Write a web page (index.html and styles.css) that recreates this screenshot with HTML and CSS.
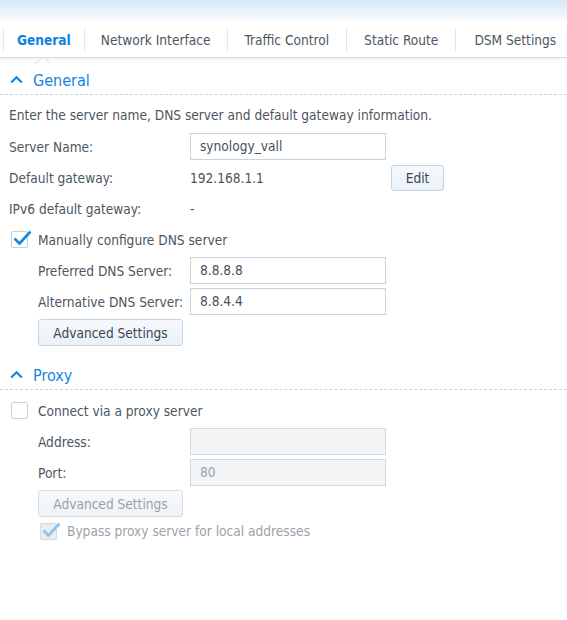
FILE: index.html
```html
<!DOCTYPE html>
<html>
<head>
<meta charset="utf-8">
<link rel="stylesheet" href="styles.css">
</head>
<body>
<div class="topband"></div>
<div class="tabs">
  <div class="tab active">General
    <svg class="notch" width="16" height="7" viewBox="0 0 16 7"><path d="M0 6.5 L8 0.5 L16 6.5" fill="#fff" stroke="#d3d9df" stroke-width="1"/></svg>
  </div>
  <div class="tab net">Network Interface</div>
  <div class="tab">Traffic Control</div>
  <div class="tab">Static Route</div>
  <div class="tab last">DSM Settings</div>
</div>

<div class="section-head first">
  <svg class="chev" width="13" height="9" viewBox="0 0 13 9"><path d="M1.2 7.5 L6.5 2.2 L11.8 7.5" fill="none" stroke="#1585de" stroke-width="2.2"/></svg>
  <span>General</span>
</div>
<div class="section-body general">
  <div class="desc">Enter the server name, DNS server and default gateway information.</div>
  <div class="rows">
    <div class="row"><span class="label">Server Name:</span><div class="input">synology_vall</div></div>
    <div class="row"><span class="label">Default gateway:</span><span class="value">192.168.1.1</span><button class="btn edit">Edit</button></div>
    <div class="row"><span class="label">IPv6 default gateway:</span><span class="value">-</span></div>
    <div class="row"><span class="cb checked"><svg class="tick" width="20" height="18" viewBox="0 0 20 18"><path d="M2.5 9.5 L7.5 14.5 L18.5 2.5" fill="none" stroke="#1688e0" stroke-width="2.6"/></svg></span><span class="cb-label">Manually configure DNS server</span></div>
    <div class="row sub"><span class="label">Preferred DNS Server:</span><div class="input">8.8.8.8</div></div>
    <div class="row sub"><span class="label">Alternative DNS Server:</span><div class="input">8.8.4.4</div></div>
    <div class="row sub"><button class="btn adv">Advanced Settings</button></div>
  </div>
</div>

<div class="section-head">
  <svg class="chev" width="13" height="9" viewBox="0 0 13 9"><path d="M1.2 7.5 L6.5 2.2 L11.8 7.5" fill="none" stroke="#1585de" stroke-width="2.2"/></svg>
  <span>Proxy</span>
</div>
<div class="section-body proxy">
  <div class="rows">
    <div class="row"><span class="cb"></span><span class="cb-label">Connect via a proxy server</span></div>
    <div class="row sub"><span class="label">Address:</span><div class="input disabled"></div></div>
    <div class="row sub"><span class="label">Port:</span><div class="input disabled">80</div></div>
    <div class="row sub"><button class="btn adv disabled">Advanced Settings</button></div>
    <div class="row sub short"><span class="cb checked disabled"><svg class="tick" width="20" height="18" viewBox="0 0 20 18"><path d="M2.5 9.5 L7.5 14.5 L18.5 2.5" fill="none" stroke="#8cc3ec" stroke-width="2.6"/></svg></span><span class="cb-label dis">Bypass proxy server for local addresses</span></div>
  </div>
</div>
</body>
</html>
```
FILE: styles.css
```css
html, body {
  margin: 0;
  padding: 0;
  background: #fff;
}
body {
  font-family: "DejaVu Sans Condensed", "DejaVu Sans", sans-serif;
  font-stretch: condensed;
  font-size: 13.6px;
  color: #4c5661;
  width: 567px;
  overflow: hidden;
}
.topband {
  height: 22px;
  background: linear-gradient(to bottom, #d5e9f8 0%, #e6f2fb 50%, #fbfdff 100%);
}
.tabs {
  display: flex;
  align-items: center;
  height: 35px;
  padding-left: 3px;
  border-bottom: 1px solid #d6dce2;
  box-shadow: 0 2px 2px rgba(0, 0, 0, 0.05);
  position: relative;
}
.tab {
  position: relative;
  line-height: 24px;
  padding: 0 17px;
  border-left: 1px solid #e1e6eb;
  white-space: nowrap;
  color: #4c5661;
}
.tab.net {
  padding: 0 16px;
}
.tab.last {
  border-right: 1px solid #e1e6eb;
  padding: 0 18px;
}
.tab.active {
  color: #0a84e0;
  font-weight: bold;
  padding: 0 13px;
}
.notch {
  position: absolute;
  left: 31px;
  bottom: -12px;
}
.section-head {
  display: flex;
  align-items: center;
  padding-top: 8px;
  height: 28px;
  border-bottom: 1px dashed #c7d6e3;
  color: #1585de;
  font-size: 16px;
  padding-left: 10px;
}
.section-head .chev {
  margin-right: 10px;
  margin-top: -1px;
}
.section-body.general {
  padding-top: 10px;
  padding-bottom: 7px;
}
.section-body.proxy {
  padding-top: 7px;
}
.desc {
  padding-left: 9px;
  line-height: 20px;
  margin-bottom: 8px;
}
.rows {
  display: flex;
  flex-direction: column;
  gap: 4px;
}
.row {
  display: flex;
  align-items: center;
  height: 27px;
  padding-left: 9px;
}
.row.sub {
  padding-left: 38px;
}
.row.short {
  height: 20px;
}
.label {
  width: 181px;
  flex: none;
}
.row.sub .label {
  width: 152px;
}
.value {
  width: 201px;
  flex: none;
}
.input {
  box-sizing: border-box;
  width: 196px;
  height: 27px;
  border: 1px solid #c6d3de;
  padding-left: 9px;
  line-height: 25px;
  color: #46505a;
  background: #fff;
}
.input.disabled {
  background: #f3f5f7;
  border-color: #d2dae1;
  color: #9aa2aa;
}
.btn {
  box-sizing: border-box;
  font-family: inherit;
  font-stretch: condensed;
  font-size: 13.6px;
  color: #3c4650;
  border: 1px solid #c6d4e0;
  border-radius: 3px;
  background: linear-gradient(to bottom, #f6f9fc, #e9f1f8);
  padding: 0;
  height: 27px;
}
.btn.edit {
  width: 53px;
  height: 26px;
}
.btn.adv {
  width: 145px;
}
.btn.disabled {
  color: #98a2ab;
  background: linear-gradient(to bottom, #f7fafc, #eef3f8);
  border-color: #d3dde6;
}
.cb {
  position: relative;
  box-sizing: border-box;
  width: 17px;
  height: 17px;
  border: 1px solid #c9d1d8;
  border-radius: 2px;
  background: #fff;
  margin-left: 2px;
  margin-right: 10px;
  flex: none;
}
.cb.disabled {
  background: #e9edf0;
  border-color: #d5dbe0;
}
.tick {
  position: absolute;
  left: 0px;
  top: -3px;
}
.cb-label.dis {
  color: #9aa2aa;
}
```
